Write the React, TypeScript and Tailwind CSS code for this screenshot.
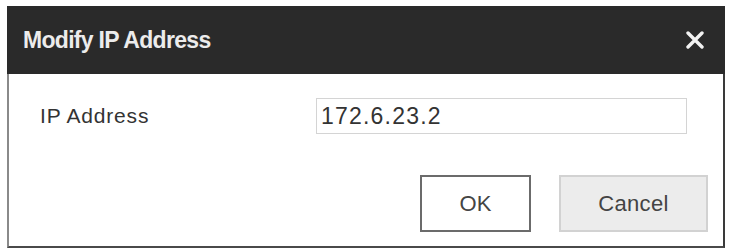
export default function App() {
  return (
    <div className="h-[250px] w-[729px] bg-white pl-[7px] pt-[6px]" style={{ fontFamily: '"Liberation Sans", Arial, sans-serif' }}>
      <div className="flex h-[242px] w-[718px] flex-col">
        {/* header */}
        <div className="flex h-[68px] shrink-0 items-center justify-between bg-[#2a2a2a] pl-[16px] pr-[21px]">
          <span className="text-[23px] font-bold tracking-[-0.7px] text-[#ececec]">Modify IP Address</span>
          <svg width="18" height="18" viewBox="0 0 18 18" aria-hidden="true">
            <path d="M2 2 L16 16 M16 2 L2 16" stroke="#f2f2f2" strokeWidth="3.4" strokeLinecap="round" />
          </svg>
        </div>

        {/* body */}
        <div className="flex flex-1 flex-col border-b-2 border-l-2 border-r-2 border-b-[#4a4a4a] border-l-[#8a8a8a] border-r-[#3a3a3a] pt-[24px]">
          <div className="flex items-center">
            <label className="w-[307px] pl-[31px] text-[21px] tracking-[0.8px] text-[#333]">IP Address</label>
            <div className="flex h-[36px] w-[371px] items-center border border-[#d4d4d4] bg-white pl-[4px] text-[23px] tracking-[1.2px] text-[#333]">
              172.6.23.2
            </div>
          </div>

          <div className="mt-[41px] flex justify-end gap-[28px] pr-[15px]">
            <button className="flex h-[57px] w-[111px] items-center justify-center border-2 border-[#6b6b6b] bg-white text-[22px] text-[#444]">
              OK
            </button>
            <button className="flex h-[57px] w-[149px] items-center justify-center border-2 border-[#d2d2d2] bg-[#ececec] text-[22px] tracking-[0.3px] text-[#444]">
              Cancel
            </button>
          </div>
        </div>
      </div>
    </div>
  );
}
